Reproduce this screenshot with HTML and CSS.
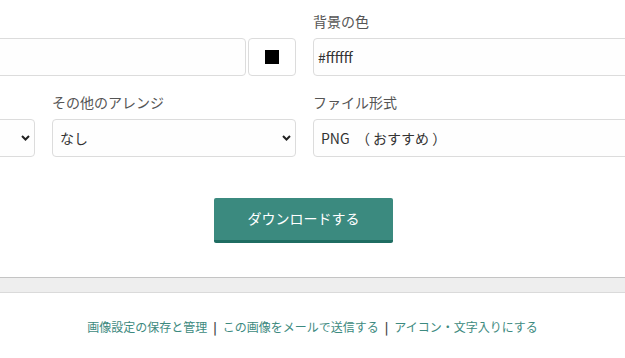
FILE: index.html
```html
<!DOCTYPE html>
<html lang="ja">
<head>
    <title>画像のダウンロード</title>
    <meta charset="UTF-8">
    <meta name="viewport" content="width=device-width, initial-scale=1">
    <link rel="stylesheet" href="styles.css">
</head>
<body>
    <div class="panel">
        <form class="form">
            <div class="field wide">
                <label class="label">&nbsp;</label>
                <div class="color-row">
                    <input type="text" class="input grow" value="">
                    <button type="button" class="swatch"><span class="swatch-box"></span></button>
                </div>
            </div>
            <div class="field">
                <label class="label">背景の色</label>
                <input type="text" class="input" value="#ffffff">
            </div>

            <div class="field">
                <label class="label">&nbsp;</label>
                <div class="select-wrap">
                    <select class="select"><option></option></select>
                    <svg class="chevron" width="9" height="6" viewBox="0 0 9 6"><path d="M1 1 L4.5 4.5 L8 1" fill="none" stroke="#222" stroke-width="2"/></svg>
                </div>
            </div>
            <div class="field">
                <label class="label">その他のアレンジ</label>
                <div class="select-wrap">
                    <select class="select"><option>なし</option></select>
                    <svg class="chevron" width="9" height="6" viewBox="0 0 9 6"><path d="M1 1 L4.5 4.5 L8 1" fill="none" stroke="#222" stroke-width="2"/></svg>
                </div>
            </div>
            <div class="field">
                <label class="label">ファイル形式</label>
                <div class="select-wrap">
                    <select class="select"><option>PNG &nbsp;（&nbsp;おすすめ&nbsp;）</option></select>
                    <svg class="chevron" width="9" height="6" viewBox="0 0 9 6"><path d="M1 1 L4.5 4.5 L8 1" fill="none" stroke="#222" stroke-width="2"/></svg>
                </div>
            </div>

            <div class="actions">
                <button type="button" class="download">ダウンロードする</button>
            </div>
        </form>
    </div>
    <div class="band"></div>
    <p class="links">
        <a href="#">画像設定の保存と管理</a><span class="sep">|</span><a href="#">この画像をメールで送信する</a><span class="sep">|</span><a href="#">アイコン・文字入りにする</a>
    </p>
</body>
</html>
```

FILE: styles.css
```css
body {
    margin: 0;
    overflow: hidden;
    background-color: #fff;
    color: #333;
    font-family: "Noto Sans CJK JP", "Noto Sans", sans-serif;
}
.panel {
    height: 277px;
    border-bottom: 1px solid #c4c4c4;
    background-color: #fff;
}
.form {
    display: grid;
    grid-template-columns: 244px 244px 1fr;
    column-gap: 17px;
    row-gap: 16px;
    width: 1025px;
    margin-left: -209px;
    padding-top: 11px;
}
.field {
    display: flex;
    flex-direction: column;
}
.wide {
    grid-column: span 2;
}
.label {
    font-size: 14px;
    line-height: 20px;
    color: #555;
    margin-bottom: 7px;
}
.color-row {
    display: flex;
    gap: 2px;
}
.input, .select {
    box-sizing: border-box;
    height: 38px;
    border: 1px solid #dcdcdc;
    border-radius: 4px;
    background-color: #fefefe;
    font-family: "Noto Sans CJK JP", "Noto Sans", sans-serif;
    font-size: 14px;
    color: #333;
}
.input {
    padding: 0 4px;
}
.grow {
    flex: 1;
}
.swatch {
    width: 48px;
    height: 38px;
    border: 1px solid #dcdcdc;
    border-radius: 4px;
    background-color: #fff;
    display: flex;
    align-items: center;
    justify-content: center;
    padding: 0;
}
.swatch-box {
    width: 14px;
    height: 14px;
    background-color: #000;
}
.select-wrap {
    position: relative;
}
.select {
    width: 100%;
    padding: 0 24px 0 7px;
    appearance: none;
}
.chevron {
    position: absolute;
    right: 5px;
    top: 16px;
}
.actions {
    grid-column: 1 / -1;
    display: flex;
    justify-content: center;
    padding-top: 25px;
}
.download {
    width: 179px;
    height: 45px;
    border: none;
    border-bottom: 3px solid #1f6d62;
    border-radius: 2px;
    background-color: #3b8a7f;
    color: #fff;
    font-family: "Noto Sans CJK JP", "Noto Sans", sans-serif;
    font-size: 14px;
    padding: 0 0 2px;
}
.band {
    height: 14px;
    background-color: #eee;
    border-bottom: 1px solid #dadada;
}
.links {
    margin: 25px 0 0;
    text-align: center;
    font-size: 12px;
    line-height: 18px;
}
.links a {
    color: #3d8a80;
    text-decoration: none;
}
.sep {
    color: #444;
    font-weight: bold;
    margin: 0 6px;
}
```
